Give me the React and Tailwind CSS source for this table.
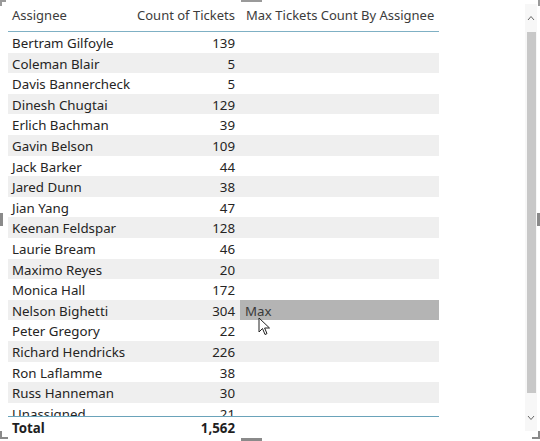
import React from "react";

const rows = [
  ["Bertram Gilfoyle", "139"],
  ["Coleman Blair", "5"],
  ["Davis Bannercheck", "5"],
  ["Dinesh Chugtai", "129"],
  ["Erlich Bachman", "39"],
  ["Gavin Belson", "109"],
  ["Jack Barker", "44"],
  ["Jared Dunn", "38"],
  ["Jian Yang", "47"],
  ["Keenan Feldspar", "128"],
  ["Laurie Bream", "46"],
  ["Maximo Reyes", "20"],
  ["Monica Hall", "172"],
  ["Nelson Bighetti", "304"],
  ["Peter Gregory", "22"],
  ["Richard Hendricks", "226"],
  ["Ron Laflamme", "38"],
  ["Russ Hanneman", "30"],
  ["Unassigned", "21"],
];

export default function App() {
  return (
    <div
      className="relative w-[540px] h-[441px] bg-white overflow-hidden text-[13.3px] text-[#252423]"
      style={{ fontFamily: '"Noto Sans", "Open Sans", sans-serif' }}
    >
      <div className="flex h-full">
        {/* table */}
        <div className="w-[439px] pl-[8px] flex flex-col h-full">
          <div className="flex h-[32px] items-center border-b border-[#7fb0c4] text-[#3c3c3c] text-[13px] pt-[1px]">
            <div className="w-[122px] pl-[4px]">Assignee</div>
            <div className="w-[110px] text-right pr-[5px] whitespace-nowrap">Count of Tickets</div>
            <div className="flex-1 pl-[6px] whitespace-nowrap">Max Tickets Count By Assignee</div>
          </div>
          <div className="h-[384px] overflow-hidden">
            {rows.map(([name, n], i) => (
              <div
                key={name}
                className={`flex h-[20.6px] ${i % 2 === 1 ? "bg-[#efefef]" : "bg-white"}`}
              >
                <div className="w-[122px] pl-[4px] pt-[2px] whitespace-nowrap">{name}</div>
                <div className="w-[110px] text-right pr-[5px] pt-[2px]">{n}</div>
                {name === "Nelson Bighetti" ? (
                  <div className="flex-1 h-full bg-[#b4b4b4] pl-[5px] pt-[2px] text-[#3a3a3a]">Max</div>
                ) : (
                  <div className="flex-1" />
                )}
              </div>
            ))}
          </div>
          <div className="flex h-[24px] items-center border-t border-[#6aa3ba] font-bold text-[#1f1f1f]">
            <div className="w-[122px] pl-[4px]">Total</div>
            <div className="w-[110px] text-right pr-[5px]">1,562</div>
            <div className="flex-1" />
          </div>
        </div>
        <div className="flex-1" />
        {/* scrollbar */}
        <div className="w-[12px] mr-[3px] flex flex-col items-center bg-[#f7f7f7] mt-[4px] mb-[10px]">
          <div className="h-[28px] flex items-center justify-center">
            <svg width="8" height="6" viewBox="0 0 8 6">
              <path d="M1 5 L4 1.5 L7 5" fill="none" stroke="#666" strokeWidth="1" />
            </svg>
          </div>
          <div className="w-[9px] h-[361px] bg-[#c8c8c8]" />
          <div className="flex-1 flex items-end justify-center pb-[10px]">
            <svg width="8" height="6" viewBox="0 0 8 6">
              <path d="M1 1 L4 4.5 L7 1" fill="none" stroke="#666" strokeWidth="1" />
            </svg>
          </div>
        </div>
      </div>

      {/* frame handles */}
      <div className="absolute left-0 top-0 w-[2px] h-[6px] bg-[#9a9a9a]" />
      <div className="absolute left-0 top-0 w-[6px] h-[2px] bg-[#9a9a9a]" />
      <div className="absolute left-0 bottom-[2px] w-[2px] h-[8px] bg-[#8a8a8a]" />
      <div className="absolute left-0 bottom-[2px] w-[8px] h-[2px] bg-[#8a8a8a]" />
      <div className="absolute right-0 top-0 w-[2px] h-[6px] bg-[#9a9a9a]" />
      <div className="absolute right-0 bottom-[2px] w-[2px] h-[8px] bg-[#8a8a8a]" />
      <div className="absolute right-0 bottom-[2px] w-[8px] h-[2px] bg-[#8a8a8a]" />
      <div className="absolute left-[241px] top-0 w-[21px] h-[2px] bg-[#9a9a9a]" />
      <div className="absolute left-[241px] bottom-0 w-[21px] h-[3px] bg-[#8a8a8a]" />
      <div className="absolute left-0 top-[213px] w-[3px] h-[13px] bg-[#8a8a8a]" />
      <div className="absolute right-0 top-[213px] w-[3px] h-[13px] bg-[#8a8a8a]" />

      {/* cursor */}
      <svg className="absolute left-[258px] top-[317px]" width="13" height="20" viewBox="0 0 13 20">
        <path d="M1 1 L1 15 L4.5 11.5 L7 17.5 L9 16.6 L6.6 11 L11.5 11 Z" fill="#fff" stroke="#222" strokeWidth="1" strokeLinejoin="round" />
      </svg>
    </div>
  );
}
